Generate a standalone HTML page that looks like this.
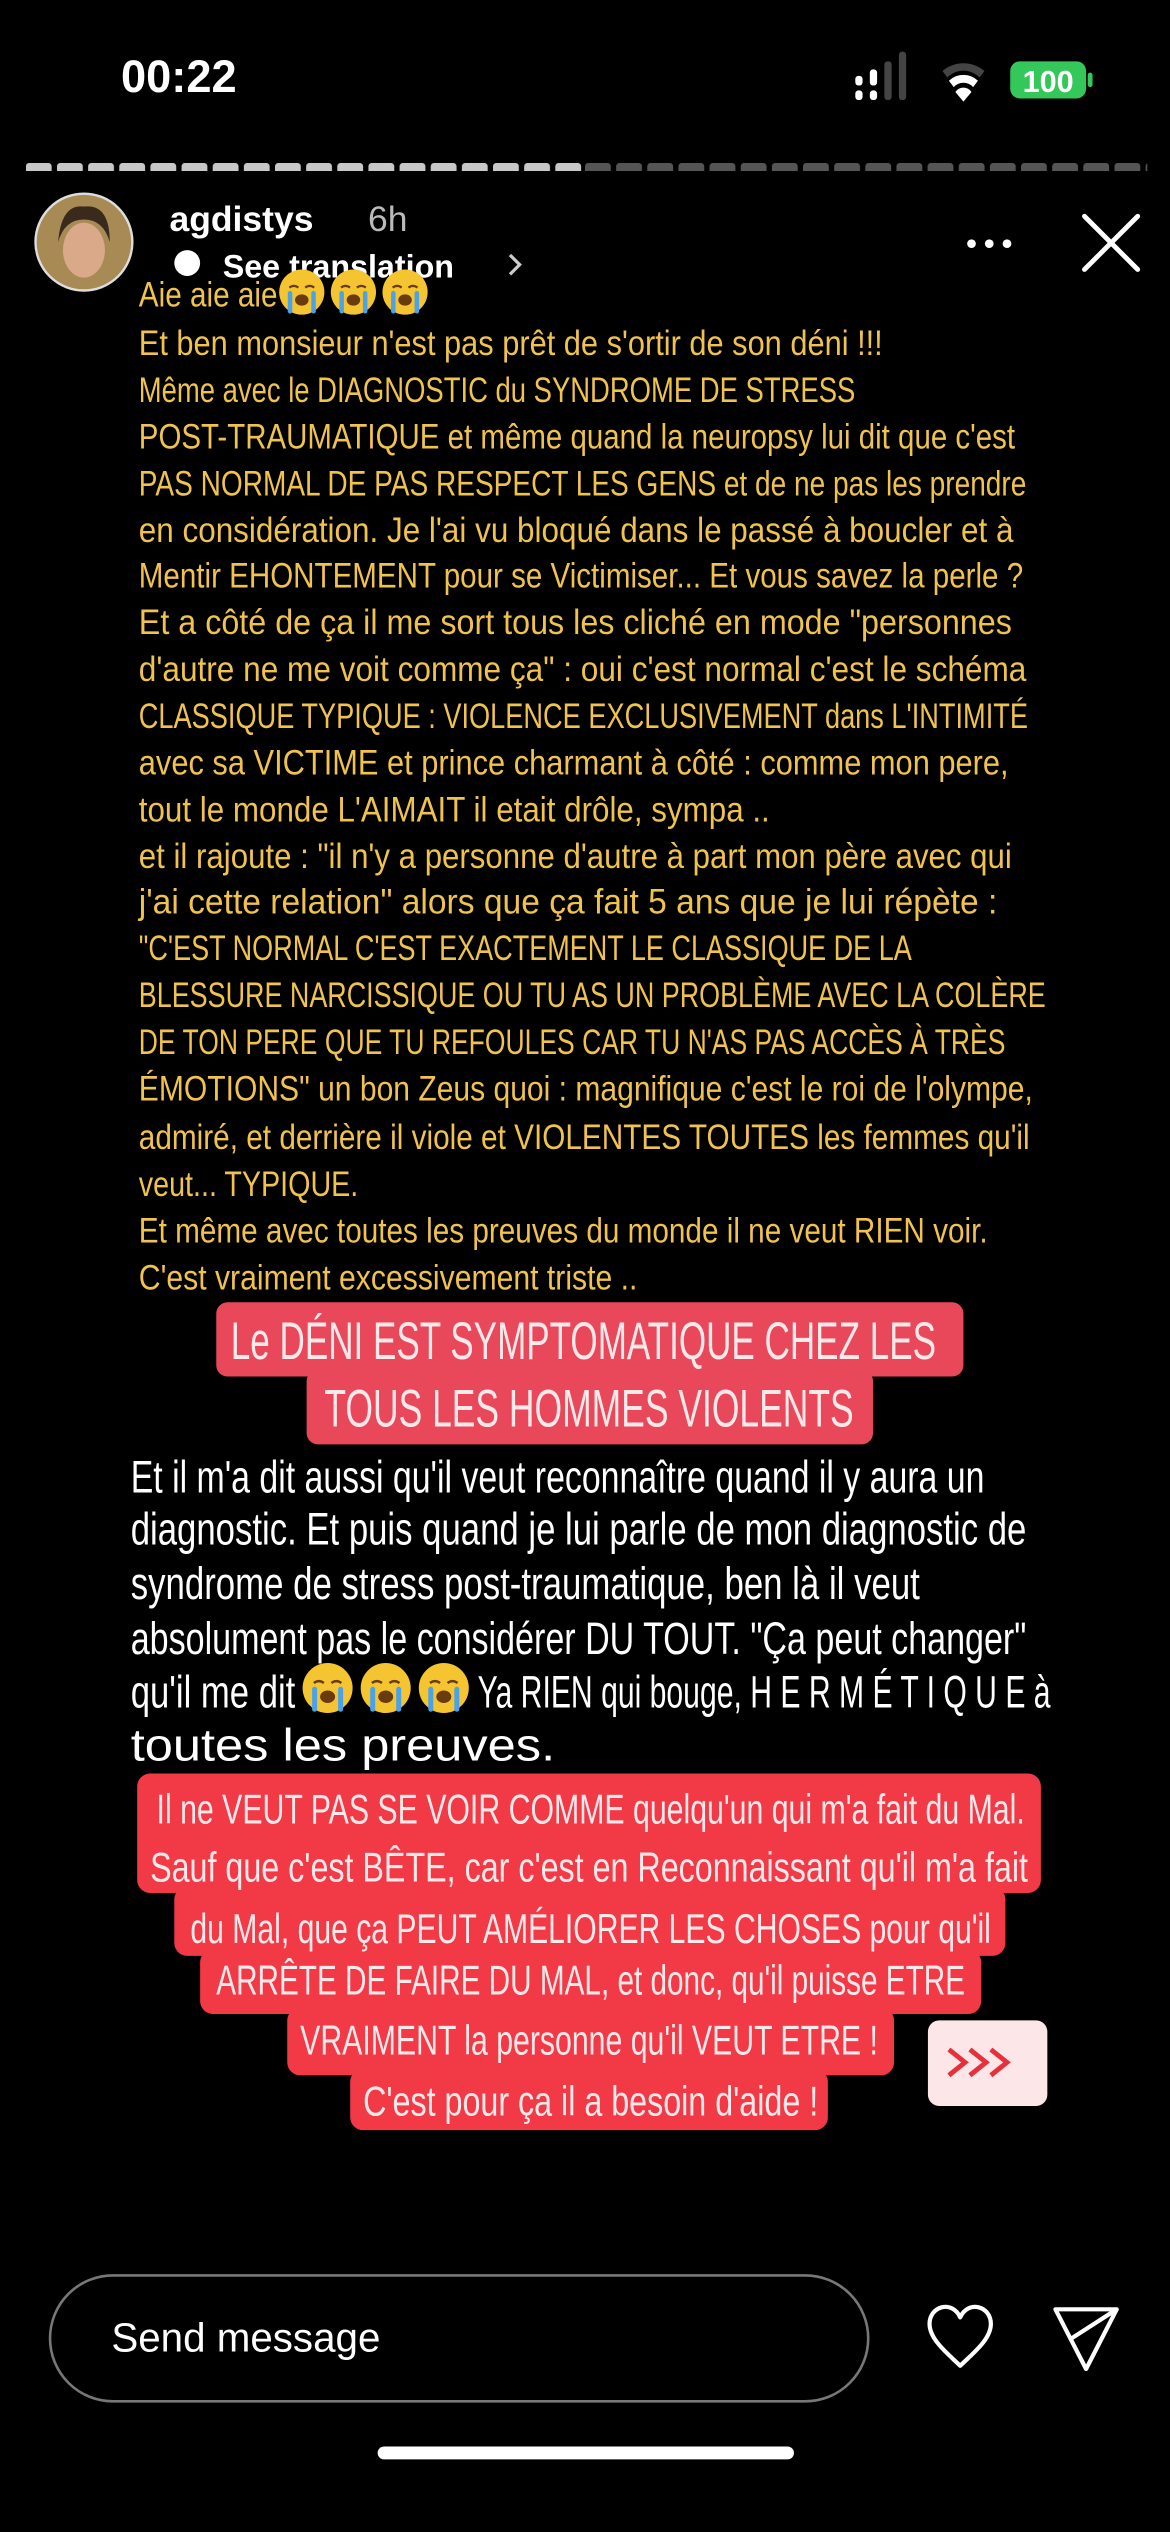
<!DOCTYPE html>
<html><head><meta charset="utf-8"><style>
html,body{margin:0;padding:0;background:#000;width:1170px;height:2532px;overflow:hidden}
svg{display:block}
.y{fill:#f0c24e;font-family:"Liberation Sans Narrow","Liberation Sans",sans-serif;font-size:22px}
.w{fill:#fff;font-family:"Liberation Sans Narrow","Liberation Sans",sans-serif;font-size:28px}
.p1{fill:#fde8ea;font-family:"Liberation Sans Narrow","Liberation Sans",sans-serif;font-size:33px}
.p2{fill:#fde8ea;font-family:"Liberation Sans Narrow","Liberation Sans",sans-serif;font-size:26px}
.ui{font-family:"Liberation Sans",sans-serif}
</style></head><body>
<svg width="1170" height="2532" viewBox="0 0 725 1569" xmlns="http://www.w3.org/2000/svg">
<defs>
<g id="emo">
<circle cx="0" cy="0" r="1" fill="#f5c431"/>
<path d="M-0.55,-0.2 q0.2,-0.15 0.4,0 M0.15,-0.2 q0.2,-0.15 0.4,0" stroke="#6b3b10" stroke-width="0.1" fill="none"/>
<ellipse cx="0" cy="0.35" rx="0.3" ry="0.25" fill="#6b3b10"/>
<rect x="-0.62" y="-0.05" width="0.2" height="1" rx="0.1" fill="#4aa3e8"/>
<rect x="0.42" y="-0.05" width="0.2" height="1" rx="0.1" fill="#4aa3e8"/>
</g>
<pattern id="segw" patternUnits="userSpaceOnUse" x="0" y="0" width="19.3" height="10"><rect x="0" y="0" width="16" height="10" rx="2" fill="#fff"/></pattern>
<pattern id="segw2" patternUnits="userSpaceOnUse" x="1.5" y="0" width="19.3" height="10"><rect x="0" y="0" width="16" height="10" rx="2" fill="#fff"/></pattern>
<mask id="m"><rect x="0" y="0" width="800" height="10" fill="url(#segw)"/></mask>
<mask id="m2"><rect x="0" y="0" width="800" height="10" fill="url(#segw2)"/></mask>
</defs>
<rect width="725" height="1569" fill="#000"/>
<!-- status -->
<text x="75" y="57" class="ui" fill="#fff" font-size="28" font-weight="bold">00:22</text>
<rect x="530" y="47" width="4.5" height="6" rx="2" fill="#fff"/><rect x="530" y="56" width="4.5" height="6" rx="2" fill="#fff"/>
<rect x="539" y="43" width="4.5" height="10" rx="2" fill="#fff"/><rect x="539" y="56" width="4.5" height="6" rx="2" fill="#fff"/>
<rect x="548" y="38" width="4.5" height="24" rx="2" fill="#444"/>
<rect x="557" y="32" width="4.5" height="30" rx="2" fill="#444"/>
<path d="M584,44 a20,20 0 0 1 26,0 l-3,4 a14,14 0 0 0 -20,0z" fill="#444"/>
<path d="M588,50 a13,13 0 0 1 18,0 l-3,4 a8,8 0 0 0 -12,0z" fill="#fff"/>
<path d="M592,57 a6,6 0 0 1 10,0 l-5,6z" fill="#fff"/>
<rect x="626" y="38" width="47" height="23" rx="6" fill="#34c759"/>
<rect x="674" y="45" width="3" height="9" rx="1.5" fill="#34c759"/>
<text x="649.5" y="57" class="ui" fill="#fff" font-size="19" font-weight="bold" text-anchor="middle">100</text>
<!-- progress -->
<svg x="16" y="101" width="345" height="5"><rect width="345" height="5" fill="#c8c8c8" mask="url(#m)"/></svg>
<svg x="361" y="101" width="350" height="5"><rect width="350" height="5" fill="#555" mask="url(#m2)"/></svg>
<!-- header -->
<circle cx="52" cy="150" r="30" fill="#a88a55"/>
<circle cx="52" cy="150" r="30" fill="none" stroke="#ddd" stroke-width="1.5"/>
<ellipse cx="52" cy="155" rx="13" ry="17" fill="#d9a98a"/>
<path d="M36,150 q2,-24 16,-22 q16,-2 16,22 q-4,-14 -16,-14 q-12,0 -16,14z" fill="#3a2a1e"/>
<text x="105" y="143" class="ui" fill="#fff" font-size="22" font-weight="bold">agdistys</text>
<text x="228" y="143" class="ui" fill="#bbb" font-size="22">6h</text>
<circle cx="116" cy="163" r="8" fill="#fff"/>
<text x="138" y="172" class="ui" fill="#fff" font-size="20" font-weight="bold">See translation</text>
<path d="M316,158 l6,6 l-6,6" stroke="#ccc" stroke-width="2" fill="none"/>
<circle cx="602" cy="151" r="2.7" fill="#fff"/><circle cx="613" cy="151" r="2.7" fill="#fff"/><circle cx="624" cy="151" r="2.7" fill="#fff"/>
<path d="M672,134 L705,167 M705,134 L672,167" stroke="#fff" stroke-width="3" stroke-linecap="round"/>
<!-- yellow text -->
<text x="86" y="190" class="y" textLength="86" lengthAdjust="spacingAndGlyphs">Aie aie aie</text>
<use href="#emo" transform="translate(187,181) scale(14)"/><use href="#emo" transform="translate(219,181) scale(14)"/><use href="#emo" transform="translate(251,181) scale(14)"/>
<text x="86" y="220" class="y" textLength="461" lengthAdjust="spacingAndGlyphs">Et ben monsieur n'est pas prêt de s'ortir de son déni !!!</text>
<text x="86" y="249" class="y" textLength="444" lengthAdjust="spacingAndGlyphs">Même avec le DIAGNOSTIC du SYNDROME DE STRESS</text>
<text x="86" y="278" class="y" textLength="543" lengthAdjust="spacingAndGlyphs">POST-TRAUMATIQUE et même quand la neuropsy lui dit que c'est</text>
<text x="86" y="307" class="y" textLength="550" lengthAdjust="spacingAndGlyphs">PAS NORMAL DE PAS RESPECT LES GENS et de ne pas les prendre</text>
<text x="86" y="336" class="y" textLength="542" lengthAdjust="spacingAndGlyphs">en considération. Je l'ai vu bloqué dans le passé à boucler et à</text>
<text x="86" y="364" class="y" textLength="548" lengthAdjust="spacingAndGlyphs">Mentir EHONTEMENT pour se Victimiser... Et vous savez la perle ?</text>
<text x="86" y="393" class="y" textLength="541" lengthAdjust="spacingAndGlyphs">Et a côté de ça il me sort tous les cliché en mode "personnes</text>
<text x="86" y="422" class="y" textLength="550" lengthAdjust="spacingAndGlyphs">d'autre ne me voit comme ça" : oui c'est normal c'est le schéma</text>
<text x="86" y="451" class="y" textLength="551" lengthAdjust="spacingAndGlyphs">CLASSIQUE TYPIQUE : VIOLENCE EXCLUSIVEMENT dans L'INTIMITÉ</text>
<text x="86" y="480" class="y" textLength="539" lengthAdjust="spacingAndGlyphs">avec sa VICTIME et prince charmant à côté : comme mon pere,</text>
<text x="86" y="509" class="y" textLength="391" lengthAdjust="spacingAndGlyphs">tout le monde L'AIMAIT il etait drôle, sympa ..</text>
<text x="86" y="538" class="y" textLength="541" lengthAdjust="spacingAndGlyphs">et il rajoute : "il n'y a personne d'autre à part mon père avec qui</text>
<text x="86" y="566" class="y" textLength="532" lengthAdjust="spacingAndGlyphs">j'ai cette relation" alors que ça fait 5 ans que je lui répète :</text>
<text x="86" y="595" class="y" textLength="479" lengthAdjust="spacingAndGlyphs">"C'EST NORMAL C'EST EXACTEMENT LE CLASSIQUE DE LA</text>
<text x="86" y="624" class="y" textLength="562" lengthAdjust="spacingAndGlyphs">BLESSURE NARCISSIQUE OU TU AS UN PROBLÈME AVEC LA COLÈRE</text>
<text x="86" y="653" class="y" textLength="537" lengthAdjust="spacingAndGlyphs">DE TON PERE QUE TU REFOULES CAR TU N'AS PAS ACCÈS À TRÈS</text>
<text x="86" y="682" class="y" textLength="554" lengthAdjust="spacingAndGlyphs">ÉMOTIONS"  un bon Zeus quoi : magnifique c'est le roi de l'olympe,</text>
<text x="86" y="712" class="y" textLength="552" lengthAdjust="spacingAndGlyphs">admiré, et derrière il viole et VIOLENTES TOUTES les femmes qu'il</text>
<text x="86" y="741" class="y" textLength="136" lengthAdjust="spacingAndGlyphs">veut... TYPIQUE.</text>
<text x="86" y="770" class="y" textLength="526" lengthAdjust="spacingAndGlyphs">Et même avec toutes les preuves du monde il ne veut RIEN voir.</text>
<text x="86" y="799" class="y" textLength="309" lengthAdjust="spacingAndGlyphs">C'est vraiment excessivement triste ..</text>
<!-- pink box 1 -->
<g fill="#e8485a">
<rect x="134" y="807" width="463" height="46" rx="7"/>
<rect x="190" y="849" width="351" height="46" rx="7"/>
</g>
<text x="143" y="842" class="p1" textLength="437" lengthAdjust="spacingAndGlyphs">Le DÉNI EST SYMPTOMATIQUE CHEZ LES</text>
<text x="201" y="884" class="p1" textLength="328" lengthAdjust="spacingAndGlyphs">TOUS LES HOMMES VIOLENTS</text>
<!-- white text -->
<text x="81" y="925" class="w" textLength="529" lengthAdjust="spacingAndGlyphs">Et il m'a dit aussi qu'il veut reconnaître quand il y aura un</text>
<text x="81" y="957" class="w" textLength="555" lengthAdjust="spacingAndGlyphs">diagnostic. Et puis quand je lui parle de mon diagnostic de</text>
<text x="81" y="991" class="w" textLength="489" lengthAdjust="spacingAndGlyphs">syndrome de stress post-traumatique, ben là il veut</text>
<text x="81" y="1025" class="w" textLength="555" lengthAdjust="spacingAndGlyphs">absolument pas le considérer DU TOUT. "Ça peut changer"</text>
<text x="81" y="1058" class="w" textLength="102" lengthAdjust="spacingAndGlyphs">qu'il me dit</text>
<use href="#emo" transform="translate(203,1046) scale(15.5)"/><use href="#emo" transform="translate(239,1046) scale(15.5)"/><use href="#emo" transform="translate(275,1046) scale(15.5)"/>
<text x="296" y="1058" class="w" textLength="355" lengthAdjust="spacingAndGlyphs">Ya RIEN qui bouge, H E R M É T I Q U E à</text>
<text x="81" y="1091" class="w" textLength="263" lengthAdjust="spacingAndGlyphs">toutes les preuves.</text>
<!-- pink box 2 -->
<g fill="#f23a47">
<rect x="85" y="1099" width="560" height="74" rx="8"/>
<rect x="108" y="1169" width="515" height="43" rx="8"/>
<rect x="124" y="1208" width="484" height="40" rx="8"/>
<rect x="178" y="1244" width="376" height="42" rx="8"/>
<rect x="217" y="1282" width="296" height="38" rx="8"/>
</g>
<text x="97" y="1130" class="p2" textLength="538" lengthAdjust="spacingAndGlyphs">Il ne VEUT PAS SE VOIR COMME quelqu'un qui m'a fait du Mal.</text>
<text x="93" y="1166" class="p2" textLength="544" lengthAdjust="spacingAndGlyphs">Sauf que c'est BÊTE, car c'est en Reconnaissant qu'il m'a fait</text>
<text x="118" y="1204" class="p2" textLength="496" lengthAdjust="spacingAndGlyphs">du Mal, que ça PEUT AMÉLIORER LES CHOSES pour qu'il</text>
<text x="134" y="1236" class="p2" textLength="464" lengthAdjust="spacingAndGlyphs">ARRÊTE DE FAIRE DU MAL, et donc, qu'il puisse ETRE</text>
<text x="186" y="1273" class="p2" textLength="358" lengthAdjust="spacingAndGlyphs">VRAIMENT la personne qu'il VEUT ETRE !</text>
<text x="225" y="1311" class="p2" textLength="282" lengthAdjust="spacingAndGlyphs">C'est pour ça il a besoin d'aide !</text>
<rect x="575" y="1252" width="74" height="53" rx="7" fill="#fde6e8"/>
<path d="M588,1270 l10,8 l-10,8 M601,1270 l10,8 l-10,8 M614,1270 l10,8 l-10,8" stroke="#e8303c" stroke-width="3" fill="none"/>
<!-- bottom -->
<rect x="31" y="1410" width="507" height="78" rx="39" fill="none" stroke="#777" stroke-width="1.6"/>
<text x="69" y="1457" class="ui" fill="#fff" font-size="25">Send message</text>
<path d="M595,1466 C588,1459 576,1450 576,1440 C576,1429 590,1425 595,1436 C600,1425 614,1429 614,1440 C614,1450 602,1459 595,1466Z" fill="none" stroke="#fff" stroke-width="2.6" stroke-linejoin="round"/>
<path d="M654,1431 L692,1431 L673,1468 Z M692,1431 L664,1449" fill="none" stroke="#fff" stroke-width="2.6" stroke-linejoin="round"/>
<rect x="234" y="1516" width="258" height="8" rx="4" fill="#fff"/>
</svg>
</body></html>
